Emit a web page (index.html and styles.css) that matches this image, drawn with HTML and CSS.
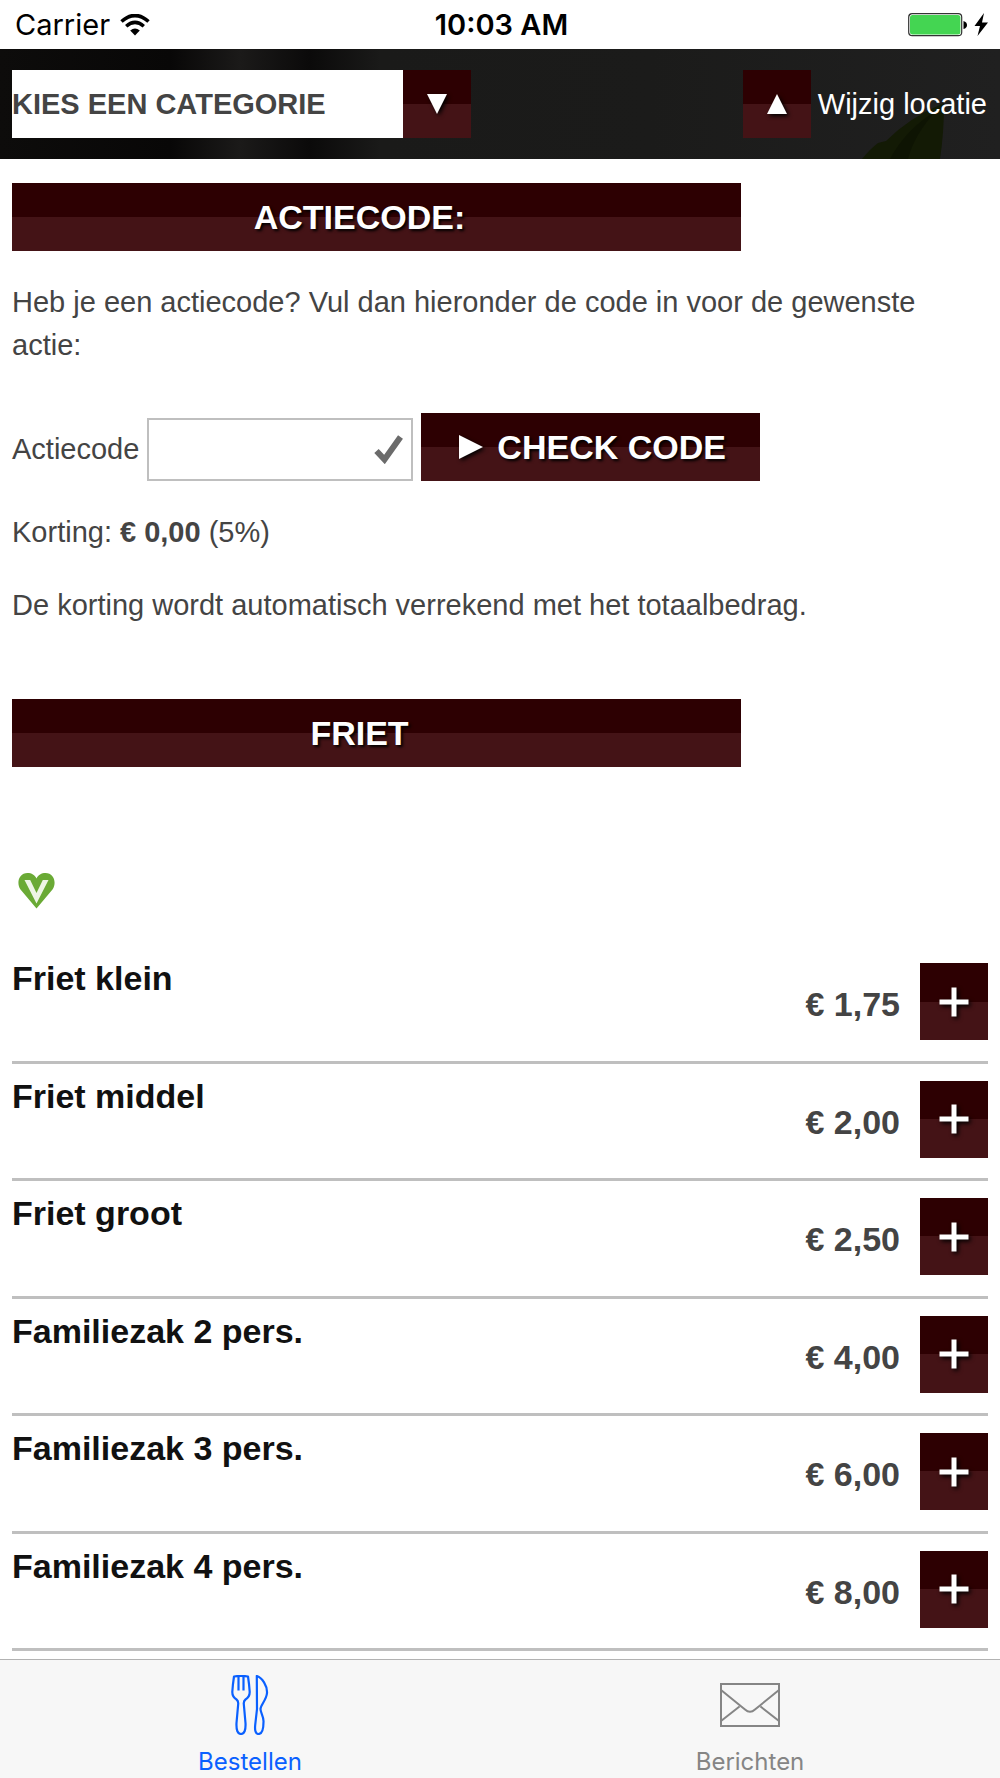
FILE: index.html
```html
<!DOCTYPE html>
<html lang="nl">
<head>
    <meta charset="utf-8">
    <meta name="viewport" content="width=device-width, initial-scale=1">
    <title>Bestellen</title>
    <link rel="stylesheet" href="styles.css">
</head>
<body>
    <div class="statusbar">
        <div class="carrier">
            <span>Carrier</span>
            <svg width="30" height="22" viewBox="0 0 30 22">
                <path d="M1.500 7.500Q15-4.500 28.500 7.500" fill="none" stroke="#000" stroke-width="3.600"/>
                <path d="M6.200 12.300Q15 4.500 23.800 12.300" fill="none" stroke="#000" stroke-width="3.500"/>
                <path d="M10.200 16.500Q15 12.500 19.800 16.500L15 21.500Z"/>
            </svg>
        </div>
        <div class="time">10:03 AM</div>
        <div class="battery">
            <svg width="80" height="24" viewBox="0 0 80 24">
                <rect x="0.700" y="0.700" width="53" height="22" rx="3.500" fill="#fff" stroke="#333" stroke-width="1.200"/>
                <rect x="2" y="2" width="50.400" height="19.400" rx="2.500" fill="#44d552"/>
                <path d="M55.500 8Q59 9 59 12T55.500 16Z"/>
                <path d="M76 0L66.500 13H72L69.500 23L80 9.500H74Z"/>
            </svg>
        </div>
    </div>

    <header class="header">
        <svg class="leaf" width="84" height="56" viewBox="0 0 84 56">
            <path d="M0 56Q8 46 16 40L24 38Q48 14 82 0Q82 30 78 56Z" fill="#131a05"/>
            <path d="M28 56Q44 26 74 8Q52 32 46 56Z" fill="#0e1403"/>
        </svg>
        <div class="category">
            <select class="category-select" aria-label="Categorie">
                <option>KIES EEN CATEGORIE</option>
                <option>FRIET</option>
            </select>
            <button class="square" type="button" aria-label="Open categorieën">
                <svg class="icon" width="20" height="20" viewBox="0 0 20 20"><path d="M0 0H20L10 20Z"/></svg>
            </button>
        </div>
        <div class="location">
            <button class="square" type="button" aria-label="Omhoog">
                <svg class="icon" width="20" height="20" viewBox="0 0 20 20"><path d="M10 0L20 20H0Z"/></svg>
            </button>
            <a href="#">Wijzig locatie</a>
        </div>
    </header>

    <main class="content">
        <h2 class="title">ACTIECODE:</h2>
        <p>Heb je een actiecode? Vul dan hieronder de code in voor de gewenste actie:</p>

        <form class="code-form">
            <label for="code">Actiecode</label>
            <div class="code-field">
                <input type="text" id="code" name="code">
                <svg class="check" width="30" height="30" viewBox="0 0 30 30">
                    <path d="M2.500 17L10.500 25.500L26.500 3" fill="none" stroke="#6b6b6b" stroke-width="6"/>
                </svg>
            </div>
            <button class="check-button" type="submit">
                <svg class="icon" width="24" height="24" viewBox="0 0 24 24"><path d="M0 0L24 12L0 24Z"/></svg>
                CHECK CODE
            </button>
        </form>

        <p>Korting: <strong>€ 0,00</strong> (5%)</p>
        <p>De korting wordt automatisch verrekend met het totaalbedrag.</p>

        <h2 class="title title-products">FRIET</h2>
        <div class="labels">
            <svg width="37" height="36" viewBox="0 0 37 36">
                <path d="M18.500 35.500L2.500 16.500C-2 10 1 0 9.500 0C13.500 0 17 2 18.500 5.500C20 2 23.500 0 27.500 0C36 0 39 10 34.500 16.500Z" fill="#6aaa35"/>
                <path d="M6.500 7H12.200L18.500 20L24.800 7H30.500L18.500 30.500Z" fill="#edf5e5"/>
            </svg>
        </div>

        <ul class="products">
            <li>
                <h3>Friet klein</h3>
                <span class="price">€ 1,75</span>
                <button class="add" type="button" aria-label="Friet klein toevoegen"><svg class="icon" width="30" height="30" viewBox="0 0 30 30"><path d="M12.500 0.500H17.500V12.500H29.500V17.500H17.500V29.500H12.500V17.500H0.500V12.500H12.500Z"/></svg></button>
            </li>
            <li>
                <h3>Friet middel</h3>
                <span class="price">€ 2,00</span>
                <button class="add" type="button" aria-label="Friet middel toevoegen"><svg class="icon" width="30" height="30" viewBox="0 0 30 30"><path d="M12.500 0.500H17.500V12.500H29.500V17.500H17.500V29.500H12.500V17.500H0.500V12.500H12.500Z"/></svg></button>
            </li>
            <li>
                <h3>Friet groot</h3>
                <span class="price">€ 2,50</span>
                <button class="add" type="button" aria-label="Friet groot toevoegen"><svg class="icon" width="30" height="30" viewBox="0 0 30 30"><path d="M12.500 0.500H17.500V12.500H29.500V17.500H17.500V29.500H12.500V17.500H0.500V12.500H12.500Z"/></svg></button>
            </li>
            <li>
                <h3>Familiezak 2 pers.</h3>
                <span class="price">€ 4,00</span>
                <button class="add" type="button" aria-label="Familiezak 2 pers. toevoegen"><svg class="icon" width="30" height="30" viewBox="0 0 30 30"><path d="M12.500 0.500H17.500V12.500H29.500V17.500H17.500V29.500H12.500V17.500H0.500V12.500H12.500Z"/></svg></button>
            </li>
            <li>
                <h3>Familiezak 3 pers.</h3>
                <span class="price">€ 6,00</span>
                <button class="add" type="button" aria-label="Familiezak 3 pers. toevoegen"><svg class="icon" width="30" height="30" viewBox="0 0 30 30"><path d="M12.500 0.500H17.500V12.500H29.500V17.500H17.500V29.500H12.500V17.500H0.500V12.500H12.500Z"/></svg></button>
            </li>
            <li>
                <h3>Familiezak 4 pers.</h3>
                <span class="price">€ 8,00</span>
                <button class="add" type="button" aria-label="Familiezak 4 pers. toevoegen"><svg class="icon" width="30" height="30" viewBox="0 0 30 30"><path d="M12.500 0.500H17.500V12.500H29.500V17.500H17.500V29.500H12.500V17.500H0.500V12.500H12.500Z"/></svg></button>
            </li>
        </ul>
    </main>

    <nav class="tabbar">
        <a class="tab active" href="#">
            <svg width="38" height="60" viewBox="0 0 38 60" fill="none" stroke="currentColor" stroke-width="2.200" stroke-linejoin="round">
                <path d="M3 1.500Q10 0.300 17 1.500Q18.300 10 18.700 17Q18.700 22 14.500 24.500Q12.500 26 12.800 29L14.500 48Q15 59 10 59Q5 59 5.500 48L7.200 29Q7.500 26 5.500 24.500Q1.300 22 1.300 17Q1.700 10 3 1.500Z"/>
                <path d="M7.500 1V15.500M12.500 1V15.500"/>
                <path d="M25.800 1C31 2.500 36.500 11 36 18C35.500 25 29.500 30 29.500 34C29.500 38 33 42 32.500 47C32.500 53 31 59 27.500 59C24 59 23.800 54 24.200 50L26 34Z"/>
            </svg>
            <span>Bestellen</span>
        </a>
        <a class="tab" href="#">
            <svg width="60" height="60" viewBox="0 0 60 60" fill="none" stroke="currentColor" stroke-width="2">
                <rect x="1" y="9" width="58" height="42"/>
                <path d="M1 15L25 34.500Q30 39 35 34.500L59 15M1 46L19.500 31.500M59 46L40.500 31.500"/>
            </svg>
            <span>Berichten</span>
        </a>
    </nav>
</body>
</html>
```

FILE: styles.css
```css
* {
    box-sizing: border-box;
}

body {
    display: flex;
    flex-direction: column;
    min-height: 100vh;
    margin: 0;
    background-color: #fff;
    color: #444;
    font-family: "Liberation Sans", Arial, sans-serif;
    font-size: 29px;
    line-height: 43px;
}

svg {
    display: block;
}

button {
    display: flex;
    align-items: center;
    justify-content: center;
    border: none;
    padding: 0;
    cursor: pointer;
}

/* status bar */
.statusbar {
    display: grid;
    grid-template-columns: 1fr auto 1fr;
    align-items: center;
    height: 49px;
    padding: 0 12px 0 15px;
    color: #000;
    font-family: Inter, sans-serif;
}

.carrier {
    display: flex;
    align-items: center;
    gap: 10px;
}

.time {
    font-weight: 600;
}

.battery {
    justify-self: end;
}

/* header */
.header {
    position: relative;
    display: flex;
    align-items: center;
    justify-content: space-between;
    height: 110px;
    padding: 0 13px 0 12px;
    background: linear-gradient(90deg, #0d0c0b 0%, #080707 17%, #1b1a19 24%, #0b0a0a 31%, #1a1a19 38%, #1b1b1a 65%, #202020 100%);
}

.leaf {
    position: absolute;
    right: 54px;
    bottom: 0;
}

.category,
.location {
    position: relative;
    display: flex;
    align-items: center;
}

.category-select {
    appearance: none;
    width: 391px;
    height: 68px;
    border: none;
    border-radius: 0;
    padding: 0;
    background-color: #fff;
    color: #444;
    font: bold 29px "Liberation Sans", Arial, sans-serif;
}

.square,
.add,
.title,
.check-button {
    background: linear-gradient(#2d0002 50%, #441316 50%);
}

.square {
    width: 68px;
    height: 68px;
}

.icon {
    fill: #fff;
    filter: drop-shadow(2px 2px 2px #000);
}

.location {
    gap: 7px;
}

.location a {
    color: #fff;
    text-decoration: none;
}

/* content */
.content {
    flex: 1;
    display: flex;
    flex-direction: column;
    padding: 24px 12px 8px;
}

.content p {
    margin: 30px 0 0;
}

.title {
    width: calc(75% - 3px);
    margin: 0;
    padding-right: 34px;
    color: #fff;
    font-size: 34px;
    line-height: 68px;
    text-align: center;
    text-shadow: 2px 2px 3px #000;
}

.title-products {
    margin-top: 72px;
}

.code-form {
    display: flex;
    align-items: flex-end;
    gap: 8px;
    margin-top: 46px;
}

.code-form label {
    line-height: 63px;
}

.code-field {
    position: relative;
}

.code-field input {
    display: block;
    width: 266px;
    height: 63px;
    border: 2px solid #bfbfbf;
    padding: 0 44px 0 8px;
    font: inherit;
}

.check {
    position: absolute;
    top: 16px;
    right: 9px;
}

.check-button {
    gap: 14px;
    height: 68px;
    padding: 0 34px 0 38px;
    color: #fff;
    font: bold 34px "Liberation Sans", Arial, sans-serif;
    text-shadow: 2px 2px 3px #000;
}

.labels {
    height: 179px;
    padding: 106px 6px 0;
}

/* products */
.products {
    flex: 1;
    display: flex;
    flex-direction: column;
    margin: 0;
    padding: 0;
    list-style: none;
}

.products li {
    flex: 1;
    display: flex;
    align-items: flex-start;
    padding: 17px 0 14px;
    border-bottom: 3px solid #bfbfbf;
}

.products h3 {
    flex: 1;
    margin: 0;
    color: #111;
    font-size: 34px;
    line-height: 30px;
}

.price {
    margin-right: 20px;
    font-size: 34px;
    font-weight: bold;
    line-height: 82px;
}

.add {
    width: 68px;
    height: 77px;
}

/* tab bar */
.tabbar {
    display: flex;
    border-top: 1px solid #b2b2b2;
    background-color: #f7f7f7;
    font-family: Inter, sans-serif;
    font-size: 24px;
    line-height: 30px;
}

.tab {
    flex: 1;
    display: flex;
    flex-direction: column;
    align-items: center;
    gap: 12px;
    padding: 15px 0 1px;
    color: #858585;
    text-decoration: none;
}

.tab.active {
    color: #0a60ff;
}
```
